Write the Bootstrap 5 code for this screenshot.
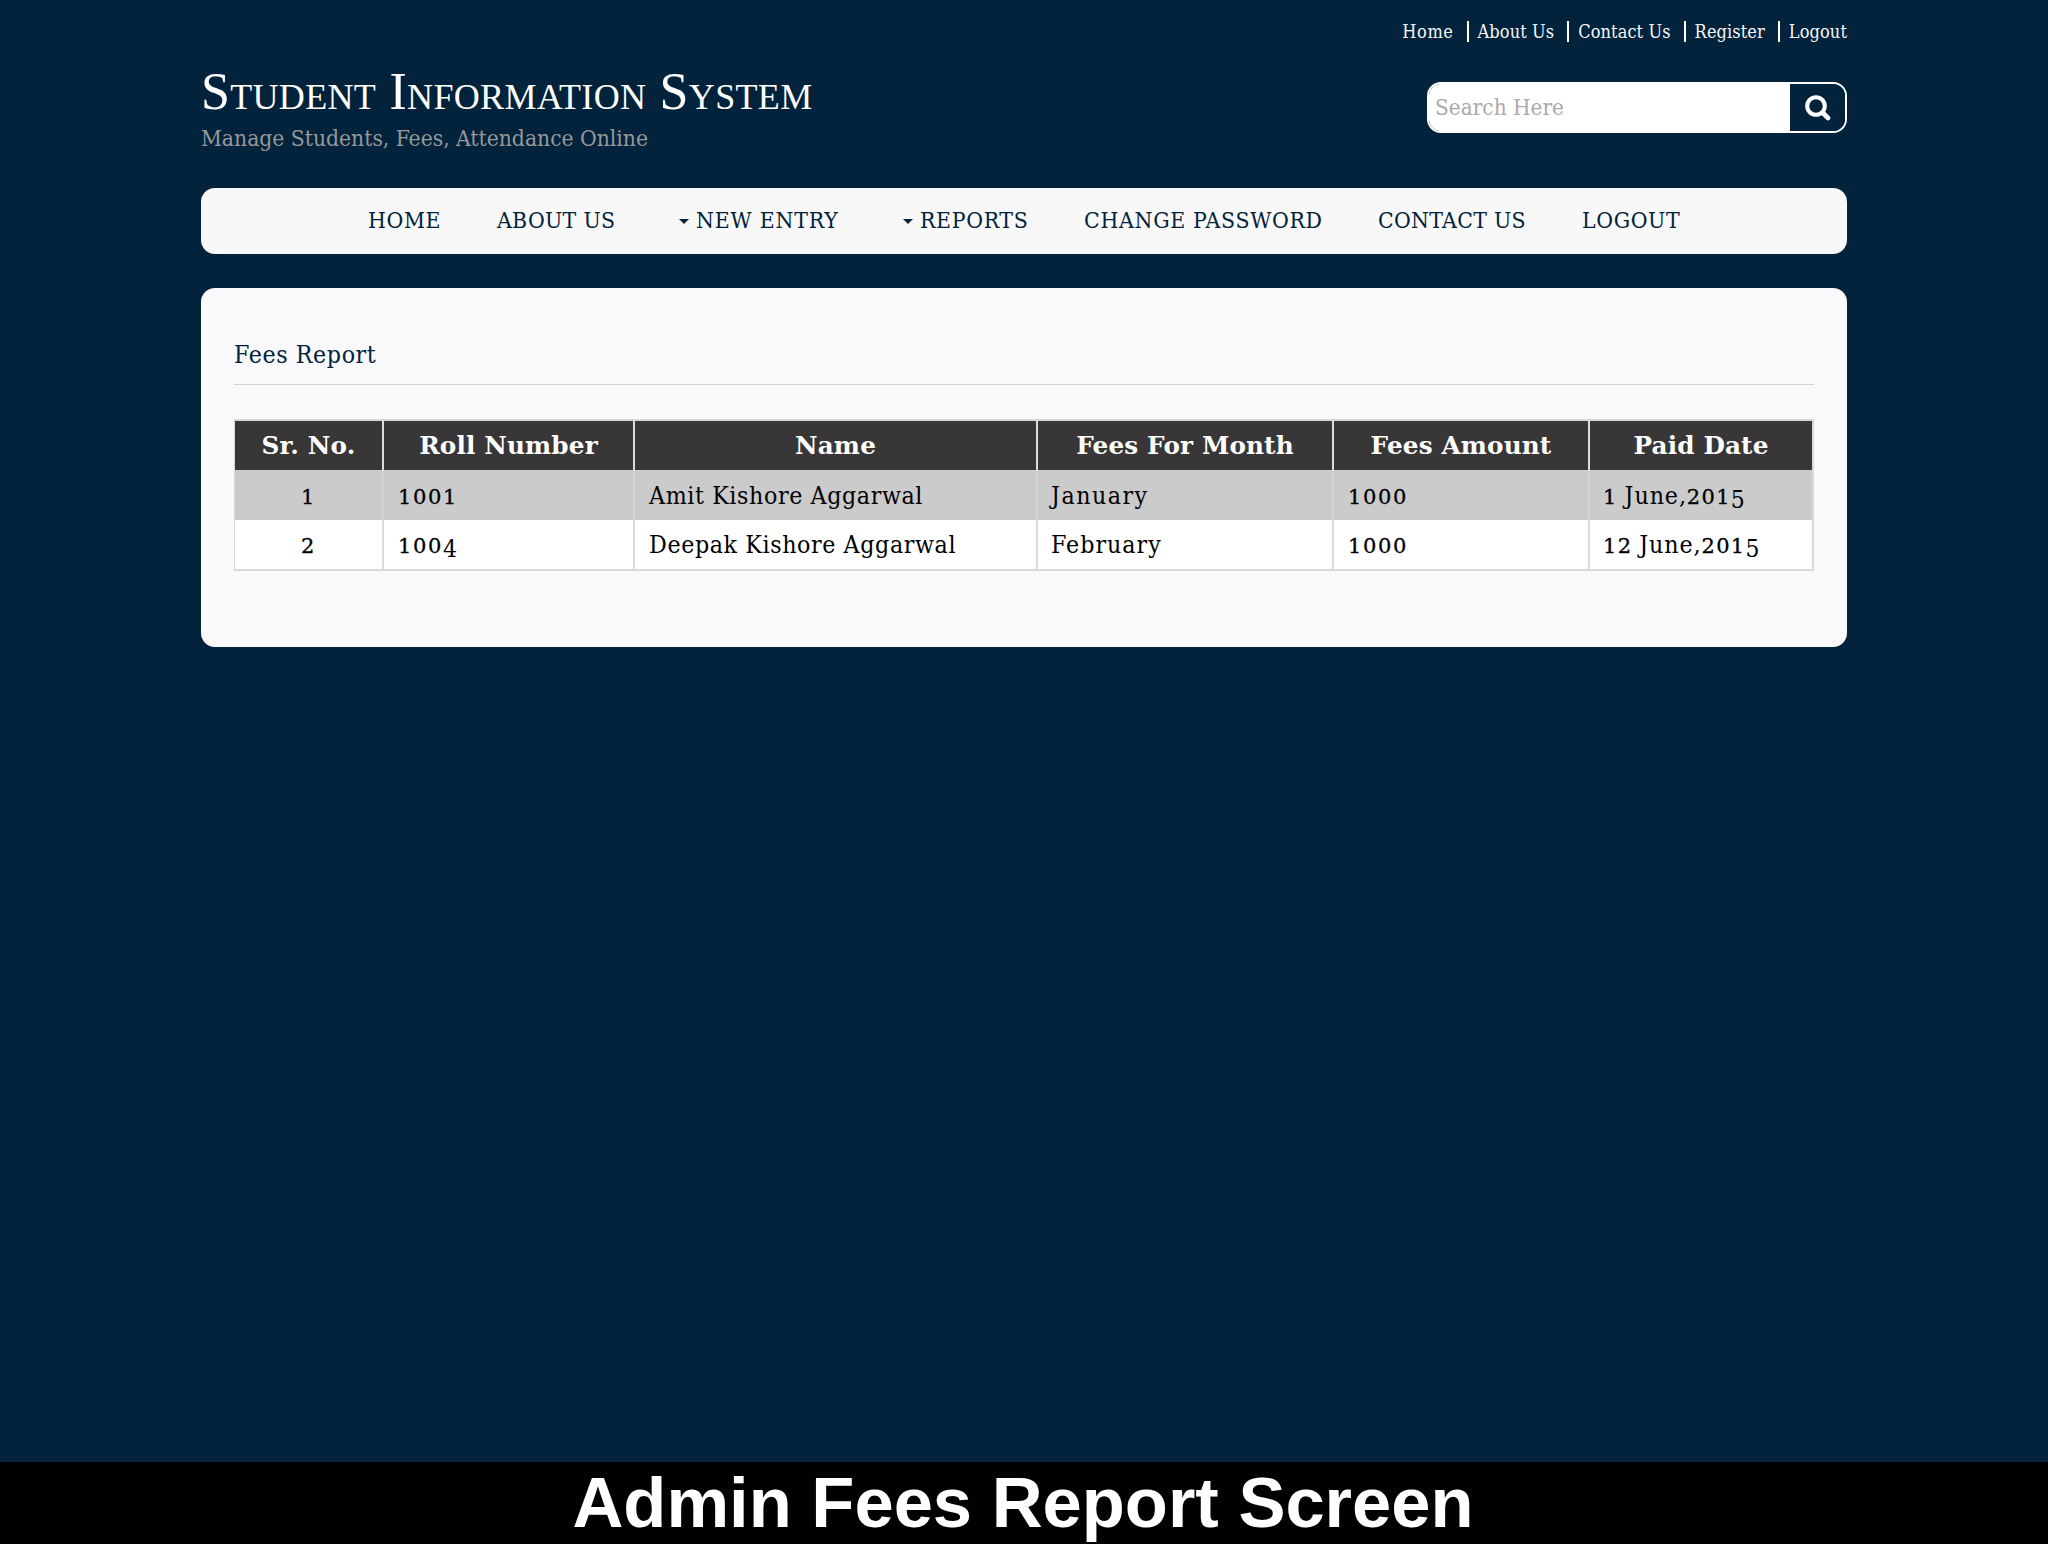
<!DOCTYPE html>
<html lang="en">
<head>
<meta charset="utf-8">
<title>Student Information System</title>
<link rel="stylesheet" href="https://cdn.jsdelivr.net/npm/bootstrap@5.3.0/dist/css/bootstrap.min.css">
<style>
body{background:#02233b;font-family:"DejaVu Serif Condensed","DejaVu Serif",serif;color:#fff;overflow:hidden}
.page-wrap{width:1646px;margin-left:201px}
.site-header{height:188px}
.brand{padding-top:62px}
.brand h1{font-family:"Liberation Serif",serif;font-size:52px;line-height:60px;font-variant:small-caps;letter-spacing:.32px;font-weight:400}
.brand p{font-size:22.7px;line-height:33px;letter-spacing:-.03px;color:#96989a}
.top-links{padding-top:21px;height:82px}
.top-links a{color:#f4f8fb;font-size:18px;line-height:22px;letter-spacing:.1px;white-space:nowrap}
.top-links li:first-child a{letter-spacing:.6px}
.top-links li+li{border-left:2px solid #fff;padding-left:9px;margin-left:13px;height:21px}
.search-box{width:420px;height:51px;border:2px solid #fff;border-radius:14px;overflow:hidden}
.search-box input{border:0;border-radius:0;padding:0 0 0 6px;font-size:22.4px;background:#fff}
.search-box input::placeholder{color:#aaa;opacity:1}
.search-box button{width:55px;border:0;border-radius:0;background:#02233b;padding:0}
.main-nav{height:66px;border-radius:14px;background:#f9f8f9}
.main-nav ul{padding:0 0 2px 167px}
.main-nav a{color:#02233b;font-size:22.8px;line-height:36px;letter-spacing:var(--track);white-space:nowrap}
.main-nav li:nth-child(1){width:129px;--track:.6px}
.main-nav li:nth-child(2){width:182px;--track:.3px}
.main-nav li:nth-child(3){width:224px;--track:.8px}
.main-nav li:nth-child(4){width:181px;--track:.65px}
.main-nav li:nth-child(5){width:294px;--track:.7px}
.main-nav li:nth-child(6){width:204px;--track:.3px}
.main-nav li:nth-child(7){width:110px;--track:.6px}
.caret-down{width:10px;height:5px;border:solid transparent;border-width:5px 5px 0;border-top-color:#02233b;margin:3px 7px 0 0}
.report-panel{margin-top:34px;height:359px;border-radius:14px;background:#f9f8fa;padding:46px 33px 0 33px}
.report-panel h2{font-size:24.7px;line-height:41px;letter-spacing:.6px;color:#02233b;font-weight:400;padding-bottom:9px;border-bottom:1.5px solid #d3d2d4;margin-bottom:34px}
.fees{table-layout:fixed;border-collapse:separate;border-spacing:0;border:2px solid #d8d7d9;border-width:2px 2px 2px 1px;color:#000;width:1580px}
.fees th,.fees td{padding:0 0 0 14px;height:49px;vertical-align:middle;line-height:32px;white-space:nowrap;border-left:2px solid #dcdbdd}
.fees th:first-child,.fees td:first-child{border-left:0;padding-left:0;padding-right:0;text-align:center}
.fees th{background:#383637;color:#fff;font:700 24.7px/32px "DejaVu Serif",serif;letter-spacing:.15px;text-align:center;padding:0}
.fees td{font-size:24.7px;letter-spacing:.6px;background:#fff}
.fees .odd-row td{background:#cccbcc;height:50px;border-color:#d5d4d5;padding-top:2px}
.fees .wide-text{letter-spacing:1px;padding-left:13px}
.fees .odd-row .wide-text{letter-spacing:1.5px}
.fees .paid-date{letter-spacing:.9px;word-spacing:-1px;padding-left:13px}
.onum{font:21px/0 "DejaVu Serif",serif;letter-spacing:1.6px;-webkit-text-stroke:.3px #000}
.fees .paid-date .onum{letter-spacing:1.3px}
.onum-low{font:24.5px/0 "DejaVu Serif Condensed","DejaVu Serif",serif;vertical-align:-4px;letter-spacing:0;-webkit-text-stroke:0}
.caption-bar{margin-top:815px;height:82px;background:#020003;font:700 70.5px/82px "Liberation Sans",sans-serif;padding-right:2px}
</style>
</head>
<body>
<div class="page-wrap">
  <header class="site-header d-flex justify-content-between">
    <div class="brand"><h1 class="m-0 text-nowrap">Student Information System</h1><p class="m-0">Manage Students, Fees, Attendance Online</p></div>
    <div class="d-flex flex-column align-items-end">
      <ul class="top-links list-unstyled d-flex mb-0">
        <li><a class="text-decoration-none d-block">Home</a></li><li><a class="text-decoration-none d-block">About Us</a></li><li><a class="text-decoration-none d-block">Contact Us</a></li><li><a class="text-decoration-none d-block">Register</a></li><li><a class="text-decoration-none d-block">Logout</a></li>
      </ul>
      <form class="search-box d-flex">
        <input class="form-control flex-fill" type="text" placeholder="Search Here">
        <button class="btn d-flex align-items-center justify-content-center flex-shrink-0" type="button" aria-label="Search"><svg width="26" height="26" viewBox="0 0 26 26" fill="none" stroke="#fff"><circle cx="11" cy="11" r="8.8" stroke-width="4"/><path d="M17.5 17.5L23 23" stroke-width="4.6" stroke-linecap="round"/></svg></button>
      </form>
    </div>
  </header>
  <nav class="main-nav d-flex align-items-center">
    <ul class="list-unstyled d-flex m-0">
      <li><a class="text-decoration-none">HOME</a></li>
      <li><a class="text-decoration-none">ABOUT US</a></li>
      <li class="d-flex align-items-center"><span class="caret-down"></span><a class="text-decoration-none">NEW ENTRY</a></li>
      <li class="d-flex align-items-center"><span class="caret-down"></span><a class="text-decoration-none">REPORTS</a></li>
      <li><a class="text-decoration-none">CHANGE PASSWORD</a></li>
      <li><a class="text-decoration-none">CONTACT US</a></li>
      <li><a class="text-decoration-none">LOGOUT</a></li>
    </ul>
  </nav>
  <main class="report-panel">
    <h2>Fees Report</h2>
    <table class="fees">
      <colgroup><col style="width:147px"><col style="width:251px"><col style="width:403px"><col style="width:296px"><col style="width:256px"><col></colgroup>
      <thead><tr><th>Sr. No.</th><th>Roll Number</th><th>Name</th><th>Fees For Month</th><th>Fees Amount</th><th>Paid Date</th></tr></thead>
      <tbody>
        <tr class="odd-row"><td><span class="onum">1</span></td><td><span class="onum">1001</span></td><td>Amit Kishore Aggarwal</td><td class="wide-text">January</td><td><span class="onum">1000</span></td><td class="paid-date"><span class="onum">1</span> June,<span class="onum">201<span class="onum-low">5</span></span></td></tr>
        <tr><td><span class="onum">2</span></td><td><span class="onum">100<span class="onum-low">4</span></span></td><td>Deepak Kishore Aggarwal</td><td class="wide-text">February</td><td><span class="onum">1000</span></td><td class="paid-date"><span class="onum">12</span> June,<span class="onum">201<span class="onum-low">5</span></span></td></tr>
      </tbody>
    </table>
  </main>
</div>
<footer class="caption-bar text-center">Admin Fees Report Screen</footer>
<script src="https://cdn.jsdelivr.net/npm/bootstrap@5.3.0/dist/js/bootstrap.bundle.min.js"></script>
</body>
</html>
